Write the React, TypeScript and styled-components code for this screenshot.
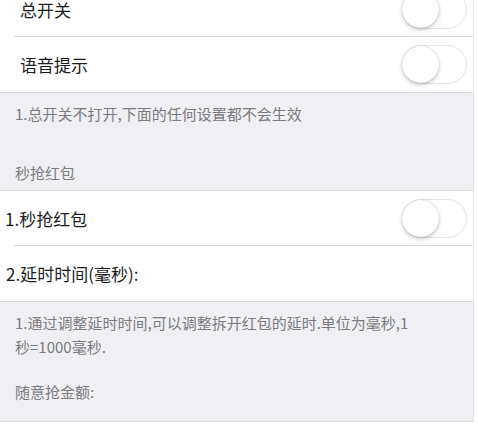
import React from "react";
import styled, { createGlobalStyle } from "styled-components";

const GlobalStyle = createGlobalStyle`
  html, body {
    margin: 0;
    padding: 0;
    background: #fff;
    overflow: hidden;
  }
  body {
    font-family: "Noto Sans CJK SC", "Noto Sans", sans-serif;
  }
`;

const Page = styled.div`
  width: 473px;
  margin-top: -18px;
  border-right: 1px solid #e3e3e6;
  background: #efeff4;
`;

const Group = styled.div`
  background: #fff;
  border-bottom: 1px solid #d9d9de;
`;

const Row = styled.div<{ $indent: number; $line?: boolean }>`
  height: 55px;
  display: flex;
  align-items: center;
  justify-content: space-between;
  padding-left: ${(p) => p.$indent}px;
  padding-right: 6px;
  position: relative;
  font-size: 17px;
  color: #1c1c1e;
  &::after {
    content: "";
    display: ${(p) => (p.$line ? "block" : "none")};
    position: absolute;
    left: 14px;
    right: 0;
    bottom: 0;
    height: 1px;
    background: #dcdce0;
  }
`;

const Switch = styled.div`
  width: 63px;
  height: 37px;
  border: 1.5px solid #e4e4e6;
  border-radius: 20px;
  background: #fff;
  display: flex;
  align-items: center;
`;

const Knob = styled.div`
  width: 37px;
  height: 37px;
  border-radius: 50%;
  background: #fff;
  margin-left: -1px;
  box-shadow: 0 2px 4px rgba(0, 0, 0, 0.22), 0 0 1px rgba(0, 0, 0, 0.3);
`;

const Footer = styled.div<{ $top: number; $gap: number; $bottom: number }>`
  padding: ${(p) => p.$top}px 15px ${(p) => p.$bottom}px 15px;
  font-size: 15px;
  line-height: 24px;
  color: #7b7b80;
  display: flex;
  flex-direction: column;
  gap: ${(p) => p.$gap}px;
  border-bottom: 1px solid #dcdce0;
`;

const Note = styled.div`
  white-space: nowrap;
`;

const Header = styled.div``;

const Toggle = () => (
  <Switch>
    <Knob />
  </Switch>
);

export default function App() {
  return (
    <>
      <GlobalStyle />
      <Page>
        <Group>
          <Row $indent={20} $line>
            总开关
            <Toggle />
          </Row>
          <Row $indent={20}>
            语音提示
            <Toggle />
          </Row>
        </Group>
        <Footer $top={9} $gap={35} $bottom={5}>
          <Note>1.总开关不打开,下面的任何设置都不会生效</Note>
          <Header>秒抢红包</Header>
        </Footer>
        <Group>
          <Row $indent={5} $line>
            1.秒抢红包
            <Toggle />
          </Row>
          <Row $indent={6}>2.延时时间(毫秒):</Row>
        </Group>
        <Footer $top={9} $gap={21} $bottom={17}>
          <Note>
            1.通过调整延时时间,可以调整拆开红包的延时.单位为毫秒,1
            <br />
            秒=1000毫秒.
          </Note>
          <Header>随意抢金额:</Header>
        </Footer>
      </Page>
    </>
  );
}
